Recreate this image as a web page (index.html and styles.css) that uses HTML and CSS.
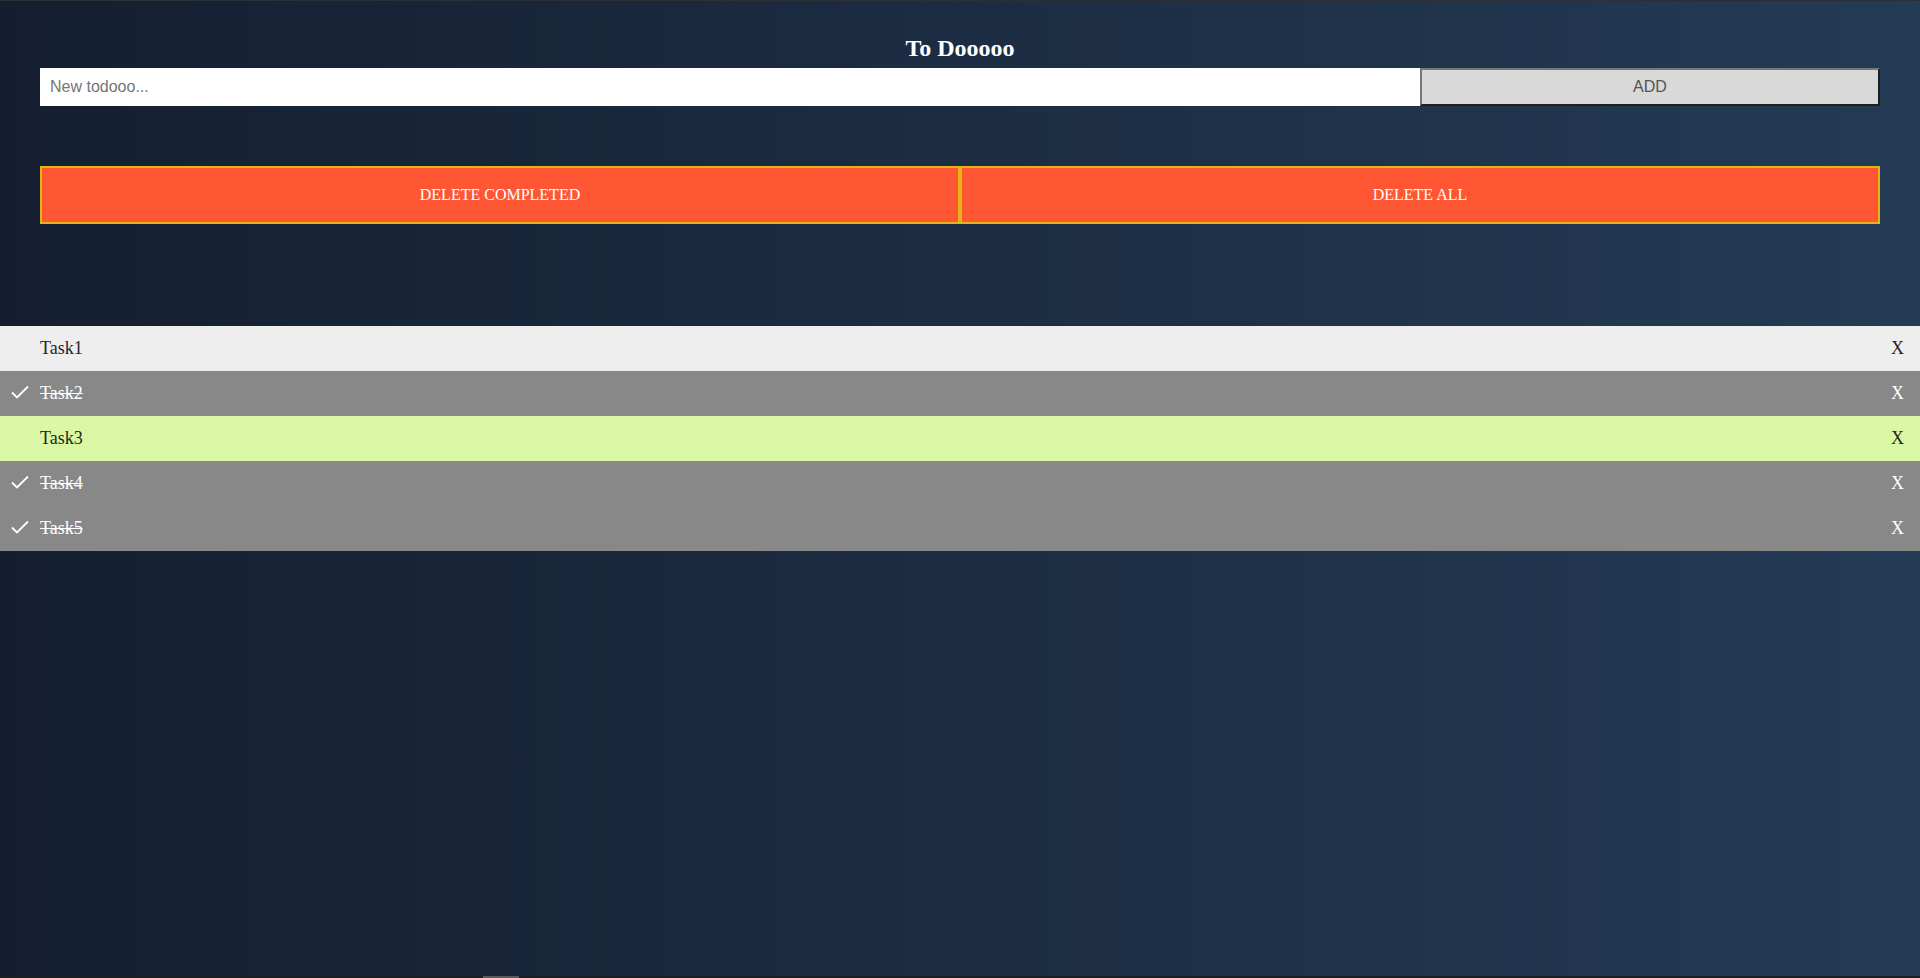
FILE: index.html
```html
<!DOCTYPE html>
<html lang="en">
<head>
<meta charset="utf-8">
<title>To Dooooo</title>
<link rel="stylesheet" href="styles.css">
</head>
<body>
  <div class="top">
    <h2 class="title">To Dooooo</h2>
    <form class="add-row" onsubmit="return false">
      <input class="new-input" type="text" placeholder="New todooo...">
      <button class="add-btn" type="submit">ADD</button>
    </form>
    <div class="delete-row">
      <button class="del-btn">DELETE COMPLETED</button>
      <button class="del-btn">DELETE ALL</button>
    </div>
  </div>
  <ul class="list">
    <li class="item item-open">
      <span class="check"></span>
      <span class="label">Task1</span>
      <span class="remove">X</span>
    </li>
    <li class="item item-done">
      <span class="check"><svg width="18" height="14" viewBox="0 0 18 14"><path d="M1 7.5 L6 12.5 L17 1.5" fill="none" stroke="#fff" stroke-width="1.8"/></svg></span>
      <span class="label">Task2</span>
      <span class="remove">X</span>
    </li>
    <li class="item item-active">
      <span class="check"></span>
      <span class="label">Task3</span>
      <span class="remove">X</span>
    </li>
    <li class="item item-done">
      <span class="check"><svg width="18" height="14" viewBox="0 0 18 14"><path d="M1 7.5 L6 12.5 L17 1.5" fill="none" stroke="#fff" stroke-width="1.8"/></svg></span>
      <span class="label">Task4</span>
      <span class="remove">X</span>
    </li>
    <li class="item item-done">
      <span class="check"><svg width="18" height="14" viewBox="0 0 18 14"><path d="M1 7.5 L6 12.5 L17 1.5" fill="none" stroke="#fff" stroke-width="1.8"/></svg></span>
      <span class="label">Task5</span>
      <span class="remove">X</span>
    </li>
  </ul>
  <div class="bottom-strip"><span class="thumb"></span></div>
</body>
</html>
```

FILE: styles.css
```css
html, body {
  margin: 0;
  padding: 0;
}

body {
  min-height: 100vh;
  box-sizing: border-box;
  border-top: 1px solid #2b2f37;
  background: linear-gradient(to right, #141e30, #243b55);
  font-family: "Liberation Serif", "Times New Roman", serif;
  color: #fff;
}

.top {
  padding: 0 40px;
}

.title {
  margin: 34px 0 6px;
  font-size: 24px;
  line-height: 27px;
  font-weight: bold;
  text-align: center;
  color: #fff;
}

.add-row {
  display: grid;
  grid-template-columns: 1380fr 460fr;
  height: 38px;
  margin: 0;
}

.new-input {
  box-sizing: border-box;
  width: 100%;
  min-width: 0;
  height: 100%;
  margin: 0;
  border: none;
  padding: 0 10px;
  font-family: "Liberation Sans", Arial, sans-serif;
  font-size: 16px;
  color: #222;
  background: #fff;
  outline: none;
}

.new-input::placeholder {
  color: #757575;
}

.add-btn {
  box-sizing: border-box;
  min-width: 0;
  height: 100%;
  margin: 0;
  border-width: 2px;
  border-style: solid;
  border-color: #767676 #1f1f1f #1f1f1f #767676;
  background: #d9d9d9;
  color: #545454;
  font-family: "Liberation Sans", Arial, sans-serif;
  font-size: 16px;
  padding: 0;
}

.delete-row {
  display: flex;
  margin-top: 60px;
  height: 58px;
}

.del-btn {
  flex: 1 1 0;
  box-sizing: border-box;
  margin: 0;
  padding: 0;
  border: 2px solid #e4b512;
  background: #ff5733;
  color: #fff;
  font-family: "Liberation Serif", "Times New Roman", serif;
  font-size: 16px;
}

.list {
  list-style: none;
  margin: 102px 0 0;
  padding: 0;
}

.item {
  display: flex;
  align-items: center;
  height: 45px;
  font-size: 18px;
}

.item-open {
  background: #eeeeee;
  color: #1f2330;
}

.item-active {
  background: #daf7a6;
  color: #1c2a14;
}

.item-done {
  background: #888888;
  color: #fff;
}

.item-done .label {
  text-decoration: line-through;
}

.check {
  width: 40px;
  flex: none;
  display: flex;
  align-items: center;
  padding-left: 11px;
  box-sizing: border-box;
  height: 100%;
}

.check svg {
  display: block;
  margin-top: -3px;
}

.label {
  flex: 1;
}

.remove {
  padding-right: 16px;
}

.bottom-strip {
  position: fixed;
  left: 0;
  right: 0;
  bottom: 0;
  height: 2px;
  background: #1e1f22;
}

.thumb {
  position: absolute;
  left: 483px;
  width: 36px;
  top: 0;
  bottom: 0;
  background: #5a5a5a;
}
```
